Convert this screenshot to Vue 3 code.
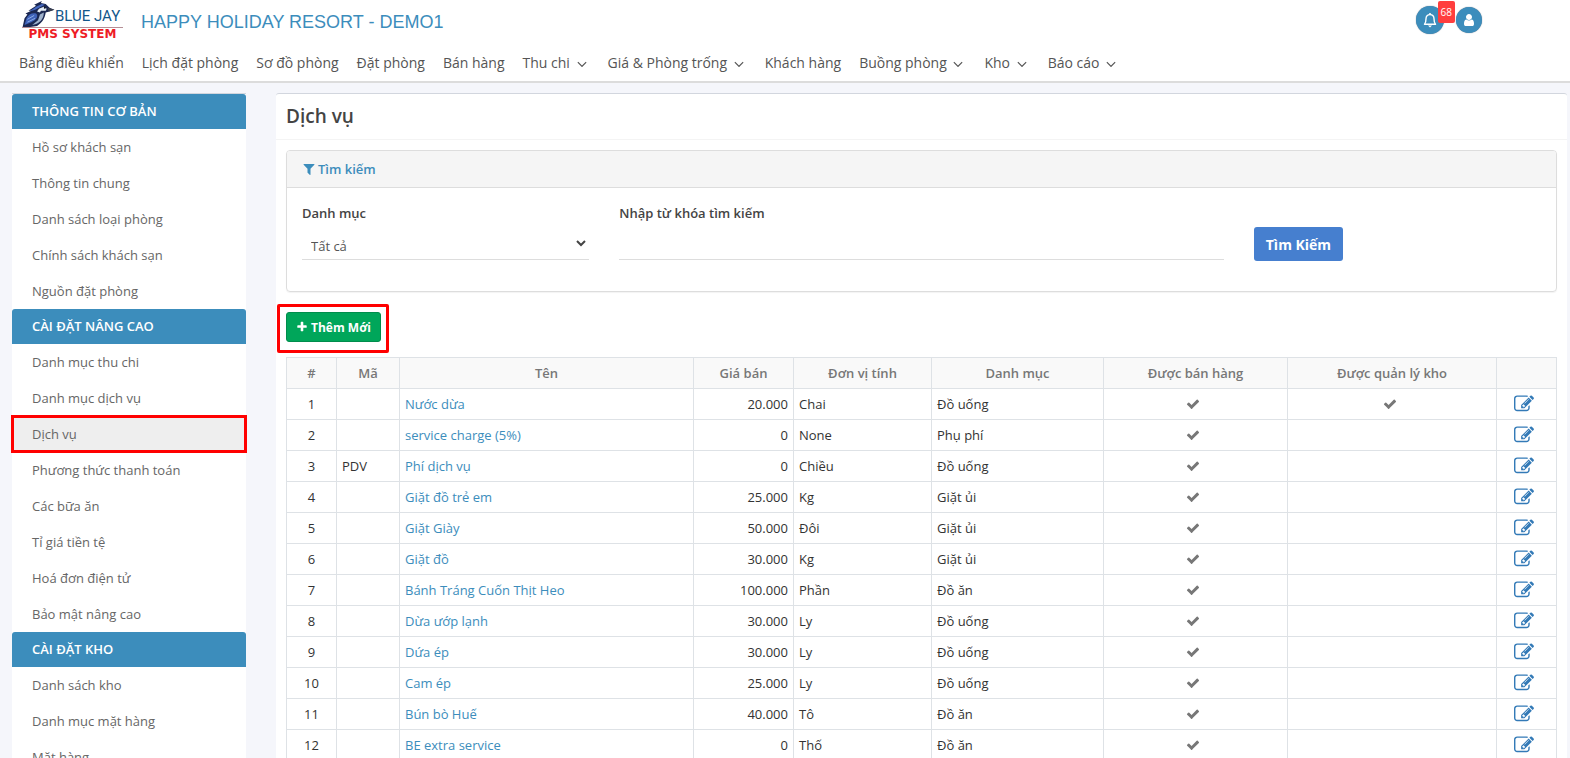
<template>
  <div class="page">
    <header class="top">
      <div class="brand-row">
        <a href="#" class="logo" aria-label="Blue Jay PMS System">
          <span class="logo-main">
            <svg class="bird" viewBox="0 0 33 27" aria-hidden="true">
              <path d="M0 27L2 18L5 14L3 13L9 10L6 10L14 5L12 4L20 0L19 2L24 3L28 7L33 9L28 11L24 12C23 18 21 22 15 26L8 27Z" fill="#1b2852" />
              <path d="M7 11L14 6L20 3L23 4L19 6L13 9Z" fill="#4568c0" />
              <path d="M2 25L4 18C6 14 10 12 14 13C17 16 14 20 9 22Z" fill="#3f62b8" />
              <path d="M5 19L12 15M5 22L13 18" stroke="#8fb0ea" stroke-width="1" />
              <path d="M17 8L22 6L25 8L24 10L19 10L18 12L15 11Z" fill="#e4edf6" />
              <path d="M18 14L22 12C22 17 20 21 14 24L10 25L16 20Z" fill="#9fb2cc" />
              <circle cx="23" cy="7" r="1" fill="#10131c" />
              <path d="M26 7L33 9L27 11Z" fill="#3a3f4c" />
            </svg>
            <span class="logo-name">BLUE JAY</span>
          </span>
          <span class="logo-sub">PMS SYSTEM</span>
        </a>
        <h1 class="hotel-name">HAPPY HOLIDAY RESORT - DEMO1</h1>
        <div class="user-tools">
          <button type="button" class="round-btn bell-btn" aria-label="Thông báo">
            <svg viewBox="0 0 16 16" aria-hidden="true">
              <path d="M2.500 12.200C4 10.800 4 9 4 6.800C4 4.300 5.500 2.600 8 2.600S12 4.300 12 6.800C12 9 12 10.800 13.500 12.200Z" fill="none" stroke="#fff" stroke-width="1.400" stroke-linejoin="round" />
              <path d="M8 1V2.600" stroke="#fff" stroke-width="1.600" />
              <path d="M6 13.500H10L8 15.500Z" fill="#fff" />
            </svg>
            <span class="badge">68</span>
          </button>
          <button type="button" class="round-btn" aria-label="Tài khoản">
            <svg viewBox="0 0 1792 1792" aria-hidden="true"><path :d="icons.user" fill="#fff" /></svg>
          </button>
        </div>
      </div>
      <nav class="main-nav">
        <a v-for="item in menu" :key="item.text" href="#" :class="{ 'has-sub': item.sub }">
          {{ item.text }}
          <svg v-if="item.sub" viewBox="0 0 1792 1792" aria-hidden="true"><path :d="icons.angle" /></svg>
        </a>
      </nav>
    </header>

    <div class="body">
      <aside class="sidebar">
        <section v-for="group in groups" :key="group.title">
          <h2>{{ group.title }}</h2>
          <ul>
            <li v-for="text in group.items" :key="text">
              <a href="#" :class="{ active: text === current }">{{ text }}</a>
            </li>
          </ul>
        </section>
      </aside>

      <main class="content">
        <h3 class="content-title">Dịch vụ</h3>
        <div class="content-body">
          <form class="panel" @submit.prevent>
            <div class="panel-heading">
              <svg viewBox="0 0 1792 1792" aria-hidden="true"><path :d="icons.filter" /></svg>
              Tìm kiếm
            </div>
            <div class="panel-body">
              <div class="field">
                <label for="category">Danh mục</label>
                <div class="select-wrap">
                  <select id="category" v-model="category">
                    <option value="">Tất cả</option>
                    <option>Đồ uống</option>
                    <option>Đồ ăn</option>
                    <option>Giặt ủi</option>
                    <option>Phụ phí</option>
                  </select>
                  <svg viewBox="0 0 10 7" aria-hidden="true"><path d="M1 1L5 5L9 1" /></svg>
                </div>
              </div>
              <div class="field">
                <label for="keyword">Nhập từ khóa tìm kiếm</label>
                <input id="keyword" v-model="keyword" type="text" />
              </div>
              <div class="field submit">
                <button type="submit" class="btn-search">Tìm Kiếm</button>
              </div>
            </div>
          </form>

          <div class="add-box">
            <button type="button" class="btn-add">
              <svg viewBox="0 0 1792 1792" aria-hidden="true"><path :d="icons.plus" /></svg>
              Thêm Mới
            </button>
          </div>

          <table>
            <thead>
              <tr>
                <th class="c-no">#</th>
                <th class="c-code">Mã</th>
                <th class="c-name">Tên</th>
                <th class="c-price">Giá bán</th>
                <th class="c-unit">Đơn vị tính</th>
                <th class="c-cat">Danh mục</th>
                <th class="c-sale">Được bán hàng</th>
                <th class="c-stock">Được quản lý kho</th>
                <th class="c-edit"></th>
              </tr>
            </thead>
            <tbody>
              <tr v-for="(row, index) in rows" :key="index">
                <td class="center">{{ index + 1 }}</td>
                <td>{{ row.code }}</td>
                <td><a href="#">{{ row.name }}</a></td>
                <td class="right">{{ row.price }}</td>
                <td>{{ row.unit }}</td>
                <td>{{ row.cat }}</td>
                <td class="icon-cell">
                  <svg class="check" viewBox="0 0 1792 1792" aria-hidden="true"><path :d="icons.check" /></svg>
                </td>
                <td class="icon-cell">
                  <svg v-if="row.stock" class="check" viewBox="0 0 1792 1792" aria-hidden="true"><path :d="icons.check" /></svg>
                </td>
                <td class="icon-cell">
                  <a href="#" class="edit" aria-label="Sửa">
                    <svg viewBox="0 0 1792 1792" aria-hidden="true"><path :d="icons.edit" /></svg>
                  </a>
                </td>
              </tr>
            </tbody>
          </table>
        </div>
      </main>
    </div>
  </div>
</template>

<script setup>
import { ref } from 'vue'

const current = 'Dịch vụ'
const category = ref('')
const keyword = ref('')

const menu = [
  { text: 'Bảng điều khiển' },
  { text: 'Lịch đặt phòng' },
  { text: 'Sơ đồ phòng' },
  { text: 'Đặt phòng' },
  { text: 'Bán hàng' },
  { text: 'Thu chi', sub: true },
  { text: 'Giá & Phòng trống', sub: true },
  { text: 'Khách hàng' },
  { text: 'Buồng phòng', sub: true },
  { text: 'Kho', sub: true },
  { text: 'Báo cáo', sub: true }
]

const groups = [
  {
    title: 'THÔNG TIN CƠ BẢN',
    items: ['Hồ sơ khách sạn', 'Thông tin chung', 'Danh sách loại phòng', 'Chính sách khách sạn', 'Nguồn đặt phòng']
  },
  {
    title: 'CÀI ĐẶT NÂNG CAO',
    items: ['Danh mục thu chi', 'Danh mục dịch vụ', 'Dịch vụ', 'Phương thức thanh toán', 'Các bữa ăn', 'Tỉ giá tiền tệ', 'Hoá đơn điện tử', 'Bảo mật nâng cao']
  },
  {
    title: 'CÀI ĐẶT KHO',
    items: ['Danh sách kho', 'Danh mục mặt hàng', 'Mặt hàng']
  }
]

const rows = [
  { name: 'Nước dừa', price: '20.000', unit: 'Chai', cat: 'Đồ uống', stock: true },
  { name: 'service charge (5%)', price: '0', unit: 'None', cat: 'Phụ phí' },
  { code: 'PDV', name: 'Phí dịch vụ', price: '0', unit: 'Chiều', cat: 'Đồ uống' },
  { name: 'Giặt đồ trẻ em', price: '25.000', unit: 'Kg', cat: 'Giặt ủi' },
  { name: 'Giặt Giày', price: '50.000', unit: 'Đôi', cat: 'Giặt ủi' },
  { name: 'Giặt đồ', price: '30.000', unit: 'Kg', cat: 'Giặt ủi' },
  { name: 'Bánh Tráng Cuốn Thịt Heo', price: '100.000', unit: 'Phần', cat: 'Đồ ăn' },
  { name: 'Dừa ướp lạnh', price: '30.000', unit: 'Ly', cat: 'Đồ uống' },
  { name: 'Dứa ép', price: '30.000', unit: 'Ly', cat: 'Đồ uống' },
  { name: 'Cam ép', price: '25.000', unit: 'Ly', cat: 'Đồ uống' },
  { name: 'Bún bò Huế', price: '40.000', unit: 'Tô', cat: 'Đồ ăn' },
  { name: 'BE extra service', price: '0', unit: 'Thố', cat: 'Đồ ăn' }
]

const icons = {
  check: 'M1671 566q0 40-28 68l-724 724-136 136q-28 28-68 28t-68-28l-136-136-362-362q-28-28-28-68t28-68l136-136q28-28 68-28t68 28l294 295 656-657q28-28 68-28t68 28l136 136q28 28 28 68z',
  edit: 'M888 1184l116-116-152-152-116 116v56h96v96h56zm440-720q-16-16-33 1l-350 350q-17 17-1 33t33-1l350-350q17-17 1-33zm80 594v190q0 119-84.5 203.5t-203.5 84.5h-832q-119 0-203.5-84.5t-84.5-203.5v-832q0-119 84.5-203.5t203.5-84.5h832q63 0 117 25 15 7 18 23 3 17-9 29l-49 49q-14 14-32 8-23-6-45-6h-832q-66 0-113 47t-47 113v832q0 66 47 113t113 47h832q66 0 113-47t47-113v-126q0-13 9-22l64-64q15-15 35-7t20 29zm-96-738l288 288-672 672h-288v-288zm444 132l-92 92-288-288 92-92q28-28 68-28t68 28l152 152q28 28 28 68t-28 68z',
  filter: 'M1595 295q17 41-14 70l-493 493v742q0 42-39 59-13 5-25 5-27 0-45-19l-256-256q-19-19-19-45v-486l-493-493q-31-29-14-70 17-39 59-39h1280q42 0 59 39z',
  plus: 'M1600 736v192q0 40-28 68t-68 28h-416v416q0 40-28 68t-68 28h-192q-40 0-68-28t-28-68v-416h-416q-40 0-68-28t-28-68v-192q0-40 28-68t68-28h416v-416q0-40 28-68t68-28h192q40 0 68 28t28 68v416h416q40 0 68 28t28 68z',
  angle: 'M1395 736q0 13-10 23l-466 466q-10 10-23 10t-23-10l-466-466q-10-10-10-23t10-23l50-50q10-10 23-10t23 10l393 393 393-393q10-10 23-10t23 10l50 50q10 10 10 23z',
  user: 'M1536 1399q0 109-62.500 187t-150.500 78h-854q-88 0-150.500-78t-62.500-187q0-85 8.500-160.500t31.500-152 58.500-131 94-89 134.500-34.500q131 128 313 128t313-128q76 0 134.500 34.500t94 89 58.500 131 31.500 152 8.500 160.500zm-256-887q0 159-112.500 271.500t-271.500 112.500-271.500-112.500-112.500-271.500 112.500-271.500 271.500-112.500 271.500 112.500 112.500 271.500z'
}
</script>

<style>
body {
  background: #f5f6fb;
}
</style>

<style scoped>
.page {
  height: 100vh;
  overflow: hidden;
  font-family: "Open Sans", "Noto Sans", sans-serif;
  font-size: 13px;
  line-height: 20px;
  color: #333;
}

.page * {
  box-sizing: border-box;
}

a {
  color: #3c8dbc;
  text-decoration: none;
}

button,
input,
select {
  font-family: inherit;
  font-size: 13px;
}

/* header */
.top {
  background: #fff;
  border-bottom: 2px solid #dcdcdc;
}

.brand-row {
  display: flex;
  align-items: center;
  height: 44px;
  padding: 0 88px 0 22px;
}

.logo {
  width: 101px;
  height: 40px;
}

.logo-main {
  display: flex;
  align-items: flex-end;
  height: 26px;
  border-bottom: 1px solid #b58f96;
}

.bird {
  flex: none;
  width: 33px;
  height: 26px;
}

.logo-name {
  font-family: Roboto, "Liberation Sans", sans-serif;
  font-size: 15px;
  line-height: 22px;
  color: #12568a;
  white-space: nowrap;
}

.logo-sub {
  display: block;
  font-family: "DejaVu Sans", sans-serif;
  font-weight: bold;
  font-size: 12px;
  line-height: 12px;
  text-align: center;
  color: #ee1c25;
}

.hotel-name {
  margin: 0 auto 0 18px;
  font: 18px "Liberation Sans", Arial, sans-serif;
  color: #3c8dbc;
}

.user-tools {
  display: flex;
  align-items: center;
  gap: 12px;
  padding-bottom: 4px;
}

.round-btn {
  position: relative;
  display: flex;
  align-items: center;
  justify-content: center;
  width: 26px;
  height: 26px;
  padding: 0;
  border: none;
  border-radius: 50%;
  background: #3c8dbc;
  box-shadow: 0 0 1px #567;
}

.bell-btn {
  width: 28px;
  height: 28px;
}

.round-btn svg {
  width: 14px;
  height: 14px;
}

.bell-btn > svg {
  width: 16px;
  height: 16px;
}

.badge {
  position: absolute;
  top: -5px;
  right: -11px;
  padding: 0 3px;
  border-radius: 2px;
  background: #ff3e3e;
  color: #fff;
  font-size: 10px;
  line-height: 22px;
}

.main-nav {
  display: flex;
  gap: 18px;
  height: 37px;
  padding: 0 19px;
  font-size: 14px;
  line-height: 37px;
}

.main-nav a {
  color: #555;
  white-space: nowrap;
}

.main-nav svg {
  width: 16px;
  height: 16px;
  vertical-align: -4px;
  fill: #555;
}

/* sidebar */
.body {
  display: flex;
  gap: 30px;
  padding: 10px 3px 0 12px;
}

.sidebar {
  flex: 0 0 234px;
  border-top: 1px solid #d2d6de;
  background: #fff;
}

.sidebar h2 {
  margin: 0;
  padding-left: 20px;
  border-radius: 3px 3px 0 0;
  background: #3c8dbc;
  color: #fff;
  font-size: 13px;
  font-weight: 600;
  line-height: 35px;
}

.sidebar ul {
  margin: 0;
  padding: 0;
  list-style: none;
}

.sidebar li a {
  display: block;
  padding-left: 20px;
  color: #666;
  line-height: 36px;
}

.sidebar li a.active {
  background: #eee;
  outline: 3px solid #f00;
  outline-offset: -2px;
}

/* content */
.content {
  flex: 1;
  border-top: 1px solid #d2d6de;
  border-radius: 3px;
  background: #fff;
}

.content-title {
  margin: 0;
  padding: 0 10px;
  border-bottom: 1px solid #f4f4f4;
  color: #444;
  font-size: 19px;
  font-weight: 600;
  line-height: 45px;
}

.content-body {
  padding: 10px;
}

.panel {
  border: 1px solid #ddd;
  border-radius: 4px;
  box-shadow: 0 1px 1px rgba(0, 0, 0, 0.05);
}

.panel-heading {
  display: flex;
  align-items: center;
  gap: 2px;
  height: 37px;
  padding: 0 15px;
  border-bottom: 1px solid #ddd;
  border-radius: 3px 3px 0 0;
  background: #f5f5f5;
  color: #3c8dbc;
  font-weight: 600;
}

.panel-heading svg {
  width: 14px;
  height: 14px;
  fill: #3c8dbc;
}

.panel-body {
  display: grid;
  grid-template-columns: 1fr 2fr 1fr;
  padding: 15px 0 30px;
}

.field {
  padding: 0 15px;
}

.field label {
  display: block;
  margin-bottom: 3px;
  color: #444;
  font-weight: 600;
}

.select-wrap {
  position: relative;
}

.select-wrap svg {
  position: absolute;
  right: 3px;
  top: 14px;
  width: 10px;
  height: 7px;
  fill: none;
  stroke: #444;
  stroke-width: 2;
  pointer-events: none;
}

.field select,
.field input {
  display: block;
  width: 100%;
  height: 34px;
  padding: 6px 9px 0;
  border: none;
  border-bottom: 1px solid #ddd;
  background: transparent;
  color: #555;
  appearance: none;
}

.submit {
  padding-top: 24px;
}

.btn-search {
  height: 34px;
  padding: 0 12px;
  border: none;
  border-radius: 3px;
  background: #467fcf;
  color: #fff;
  font-size: 14px;
  font-weight: 700;
}

.add-box {
  width: fit-content;
  margin: 12px 0 4px -9px;
  padding: 5px 5px 8px 6px;
  border: 3px solid #f00;
  border-radius: 2px;
}

.btn-add {
  display: flex;
  align-items: center;
  gap: 3px;
  height: 30px;
  padding: 0 9px;
  border: 1px solid #008d4c;
  border-radius: 3px;
  background: #00a65a;
  color: #fff;
  font-size: 12px;
  font-weight: 700;
}

.btn-add svg {
  width: 12px;
  height: 12px;
  fill: #fff;
}

table {
  width: 100%;
  table-layout: fixed;
  border-collapse: collapse;
}

th,
td {
  height: 31px;
  padding: 0 5px;
  border: 1px solid #dee2e6;
  text-align: left;
  white-space: nowrap;
}

th {
  background: #f9f9f9;
  color: #777;
  font-weight: 600;
  text-align: center;
}

.center {
  text-align: center;
}

.right {
  text-align: right;
}

.icon-cell {
  padding-right: 10px;
}

.c-no {
  width: 50px;
}

.c-code {
  width: 63px;
}

.c-name {
  width: 294px;
}

.c-price {
  width: 100px;
}

.c-unit {
  width: 138px;
}

.c-cat {
  width: 172px;
}

.c-sale {
  width: 184px;
}

.c-stock {
  width: 209px;
}

.c-edit {
  width: 60px;
}

td svg {
  display: block;
  margin: 0 auto;
}

.check {
  width: 14px;
  height: 14px;
  fill: #777;
}

.edit svg {
  width: 20px;
  height: 20px;
  fill: #337ab7;
}
</style>
